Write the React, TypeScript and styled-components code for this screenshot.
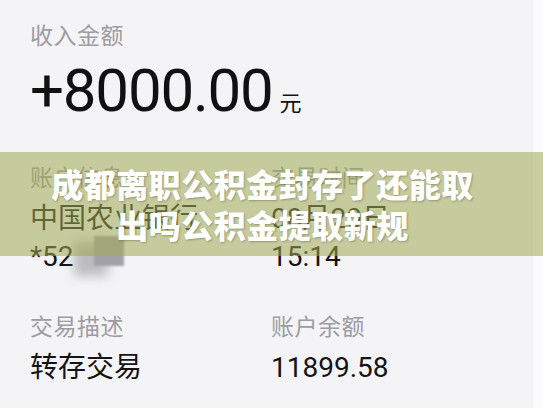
import { FunctionComponent } from 'react'
import { createGlobalStyle, styled } from 'styled-components'

const GlobalStyle = createGlobalStyle`
  html, body {
    margin: 0;
    padding: 0;
    background: #f4f3f6;
  }
  body {
    font-family: Roboto, 'Noto Sans CJK SC', sans-serif;
  }
`

const details = [
  [
    { label: '账户信息', lines: ['中国农业银行'] },
    { label: '交易时间', lines: ['08月20日', '15:14'] }
  ],
  [
    { label: '交易描述', lines: ['转存交易'] },
    { label: '账户余额', lines: ['11899.58'] }
  ]
]

const App: FunctionComponent = () => {
  return (
    <>
      <GlobalStyle />
      <Screen>
        <Main>
          <Label>收入金额</Label>
          <Amount>
            +8000.00<Unit>元</Unit>
          </Amount>
          <Grid $top='31px'>
            <Cell>
              <Label>{details[0][0].label}</Label>
              <Value>{details[0][0].lines[0]}</Value>
              <Masked>
                *52<Smudge />
              </Masked>
            </Cell>
            <Cell>
              <Label>{details[0][1].label}</Label>
              <Value>{details[0][1].lines[0]}</Value>
              <Value $tight>{details[0][1].lines[1]}</Value>
            </Cell>
          </Grid>
          <Grid $top='42px'>
            {details[1].map((item) => (
              <Cell key={item.label}>
                <Label>{item.label}</Label>
                <Value>{item.lines[0]}</Value>
              </Cell>
            ))}
          </Grid>
        </Main>
        <Edge />
        <Banner>
          <Title>
            成都离职公积金封存了还能取
            <br />
            出吗公积金提取新规
          </Title>
        </Banner>
      </Screen>
    </>
  )
}
export default App

const Screen = styled.div`
  position: relative;
  width: 543px;
  height: 408px;
  overflow: hidden;
  display: grid;
  grid-template-columns: 533px 10px;
  background: #f4f3f6;
`

const Main = styled.div`
  padding: 24px 0 0 30px;
  display: flex;
  flex-direction: column;
`

const Edge = styled.div`
  background: #fbfafc;
`

const Label = styled.div`
  font-size: 23px;
  line-height: 26px;
  color: #9d9ca1;
  letter-spacing: 0.5px;
`

const Amount = styled.div`
  margin-top: 10px;
  font-size: 60px;
  line-height: 62px;
  letter-spacing: -1.2px;
  color: #111;
  display: flex;
  align-items: baseline;
`

const Unit = styled.span`
  font-size: 22px;
  margin-left: 7px;
  letter-spacing: 0;
`

const Grid = styled.div<{ $top: string }>`
  margin-top: ${(props) => props.$top};
  display: grid;
  grid-template-columns: 241px 1fr;
`

const Cell = styled.div`
  display: flex;
  flex-direction: column;
`

const Value = styled.div<{ $tight?: boolean }>`
  margin-top: ${(props) => (props.$tight ? '6px' : '11px')};
  font-size: 28px;
  line-height: 32px;
  color: #141414;
`

const Masked = styled(Value)`
  margin-top: 6px;
  display: flex;
  align-items: center;
`

const Smudge = styled.span`
  display: inline-block;
  width: 30px;
  height: 30px;
  margin: -12px 0 0 20px;
  background: #a3a2a8;
  box-shadow: -18px 8px 10px 2px rgba(120, 120, 125, 0.45);
  filter: blur(1px);
`

const Banner = styled.div`
  position: absolute;
  left: 0;
  top: 152px;
  width: 100%;
  height: 104px;
  padding-right: 18px;
  box-sizing: border-box;
  background: rgba(158, 170, 82, 0.55);
  display: flex;
  align-items: center;
  justify-content: center;
`

const Title = styled.div`
  font-family: 'Noto Sans CJK SC', sans-serif;
  font-weight: 900;
  font-size: 32px;
  line-height: 41px;
  letter-spacing: 0.5px;
  color: #fff;
  text-align: center;
  text-shadow: 1px 1px 2px rgba(60, 60, 40, 0.35);
`
